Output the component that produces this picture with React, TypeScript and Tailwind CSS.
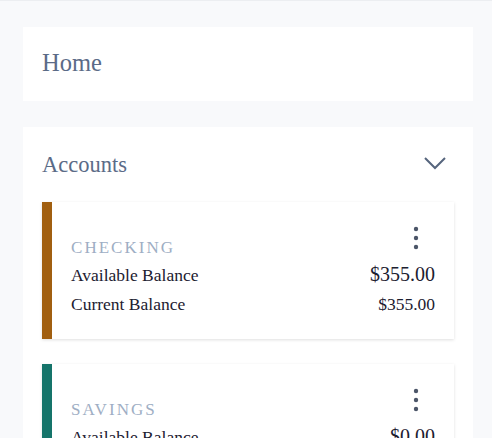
import React from 'react';

type Account = {
  id: number;
  name: string;
  accent: string;
  available: string;
  current: string;
};

const accounts: Account[] = [
  { id: 1, name: 'Checking', accent: 'border-l-[#a15f10]', available: '$355.00', current: '$355.00' },
  { id: 2, name: 'Savings', accent: 'border-l-[#15746a]', available: '$0.00', current: '$0.00' },
];

const KebabIcon: React.FC = () => (
  <svg width="6" height="24" viewBox="0 0 6 24" fill="#4b5568">
    <circle cx="3" cy="3" r="2.2" />
    <circle cx="3" cy="12" r="2.2" />
    <circle cx="3" cy="21" r="2.2" />
  </svg>
);

const ChevronDown: React.FC = () => (
  <svg width="22" height="13" viewBox="0 0 22 13" fill="none" stroke="#56657d" strokeWidth="2">
    <polyline points="1,1 11,11 21,1" />
  </svg>
);

const AccountCard: React.FC<{ account: Account }> = ({ account }) => (
  <div
    className={`bg-white border-l-[10px] ${account.accent} pl-[19px] pr-[19px] pt-[24px] pb-[25px] shadow-[0_1px_3px_rgba(0,0,0,0.13)]`}
  >
    {/* Header */}
    <div className="flex justify-between items-end">
      <span className="text-[17px] leading-[20px] tracking-[0.12em] uppercase text-[#9eaec4]">
        {account.name}
      </span>
      <button className="mb-[8px] mr-[16px]">
        <KebabIcon />
      </button>
    </div>

    {/* Balances */}
    <div className="mt-1 flex justify-between items-baseline">
      <span className="text-[17.5px] leading-[20px] text-[#1c2030]">Available Balance</span>
      <span className="text-[20px] leading-[24px] text-[#1c2030]">{account.available}</span>
    </div>
    <div className="mt-2 flex justify-between items-baseline">
      <span className="text-[17.5px] leading-[20px] text-[#1c2030]">Current Balance</span>
      <span className="text-[17.5px] leading-[20px] text-[#1c2030]">{account.current}</span>
    </div>
  </div>
);

const App: React.FC = () => {
  return (
    <div
      className="min-h-[438px] bg-[#f8f9fb] border-t border-[#eceef1] pl-[23px] pr-[19px] pt-[26px]"
      style={{ fontFamily: '"Liberation Serif", "Times New Roman", serif' }}
    >
      {/* Home */}
      <div className="bg-white pl-[19px] pt-[20px] pb-[22px]">
        <h1 className="text-[24.5px] leading-[32px] text-[#5b6b87]">Home</h1>
      </div>

      {/* Accounts */}
      <div className="mt-[26px] bg-white px-[19px] pt-[24px] pb-[24px]">
        <div className="flex justify-between items-center">
          <h2 className="text-[22.5px] leading-[28px] text-[#5b6b87]">Accounts</h2>
          <button className="mr-[8px] mb-[3px]">
            <ChevronDown />
          </button>
        </div>

        <div className="mt-[23px] flex flex-col gap-[25px]">
          {accounts.map((a) => (
            <AccountCard key={a.id} account={a} />
          ))}
        </div>
      </div>
    </div>
  );
};

export default App;
